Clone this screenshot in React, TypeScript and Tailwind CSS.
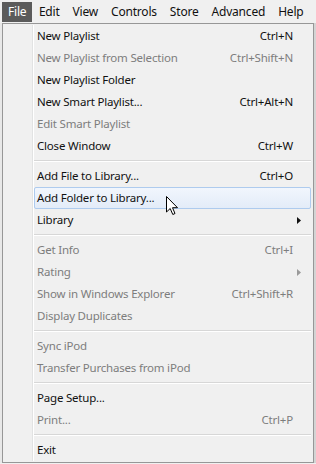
const menus = ["Edit", "View", "Controls", "Store", "Advanced", "Help"];

type Item = {
  label: string;
  shortcut?: string;
  disabled?: boolean;
  submenu?: boolean;
  active?: boolean;
};

const groups: Item[][] = [
  [
    { label: "New Playlist", shortcut: "Ctrl+N" },
    { label: "New Playlist from Selection", shortcut: "Ctrl+Shift+N", disabled: true },
    { label: "New Playlist Folder" },
    { label: "New Smart Playlist...", shortcut: "Ctrl+Alt+N" },
    { label: "Edit Smart Playlist", disabled: true },
    { label: "Close Window", shortcut: "Ctrl+W" },
  ],
  [
    { label: "Add File to Library...", shortcut: "Ctrl+O" },
    { label: "Add Folder to Library...", active: true },
    { label: "Library", submenu: true },
  ],
  [
    { label: "Get Info", shortcut: "Ctrl+I", disabled: true },
    { label: "Rating", submenu: true, disabled: true },
    { label: "Show in Windows Explorer", shortcut: "Ctrl+Shift+R", disabled: true },
    { label: "Display Duplicates", disabled: true },
  ],
  [
    { label: "Sync iPod", disabled: true },
    { label: "Transfer Purchases from iPod", disabled: true },
  ],
  [
    { label: "Page Setup..." },
    { label: "Print...", shortcut: "Ctrl+P", disabled: true },
  ],
  [{ label: "Exit" }],
];

const MenuRow = ({ item }: { item: Item }) => {
  const color = item.disabled ? "text-[#7d7d7d]" : "text-[#111]";
  return (
    <div className="flex h-[22px]">
      <div className="w-[30px] shrink-0" />
      <div
        className={`flex flex-1 items-center pl-[2px] pr-[17px] mr-[2px] rounded-[2px] border ${
          item.active
            ? "border-[#aecbee] bg-gradient-to-b from-[#f1f6fd] to-[#e3ecf8]"
            : "border-transparent"
        } ${color}`}
      >
        <span className="flex-1 whitespace-nowrap">{item.label}</span>
        {item.shortcut && <span className="whitespace-nowrap">{item.shortcut}</span>}
        {item.submenu && (
          <svg width="4" height="7" viewBox="0 0 4 7" className="mr-[-8px]">
            <path d="M0 0 L4 3.5 L0 7 Z" fill={item.disabled ? "#9a9a9a" : "#111"} />
          </svg>
        )}
      </div>
    </div>
  );
};

const Separator = () => (
  <div className="flex h-[8px] items-center">
    <div className="w-[30px] shrink-0" />
    <div className="flex-1 mr-[2px]">
      <div className="h-px bg-[#d7d7d7]" />
      <div className="h-px bg-white" />
    </div>
  </div>
);

const Cursor = () => (
  <svg
    width="13"
    height="20"
    viewBox="0 0 13 20"
    className="absolute left-[166px] top-[196px]"
  >
    <path
      d="M0.5 0.5 L0.5 16 L4.2 12.5 L6.8 18.5 L9 17.5 L6.5 11.7 L11.5 11.7 Z"
      fill="#fff"
      stroke="#000"
      strokeWidth="1"
      strokeLinejoin="miter"
    />
  </svg>
);

export default function App() {
  return (
    <div
      className="relative h-[464px] w-[316px] overflow-hidden bg-[#f0f0f0] text-[11.5px] leading-none tracking-[-0.2px]"
      style={{ fontFamily: '"Noto Sans", "Open Sans", sans-serif' }}
    >
      <div className="flex h-[23px] items-center bg-[#f0f0f0] pl-[2px] text-[12px]">
        <div className="flex h-[20px] items-center bg-[#5b5b5b] px-[6px] text-white">File</div>
        {menus.map((m) => (
          <div key={m} className="px-[6.5px] text-[#111]">
            {m}
          </div>
        ))}
      </div>
      <div className="flex">
        <div className="w-[2px] shrink-0 bg-[#e8e8e8]" />
        <div className="w-[312px] border border-[#979797] bg-[#f0f0f0] py-[1px] pl-[1px]">
          <div className="relative">
            <div className="absolute left-[28px] top-0 bottom-0 w-px bg-[#e2e3e3]" />
            <div className="absolute left-[29px] top-0 bottom-0 w-px bg-white" />
            {groups.map((g, gi) => (
              <div key={gi}>
                {gi > 0 && <Separator />}
                {g.map((item) => (
                  <MenuRow key={item.label} item={item} />
                ))}
              </div>
            ))}
          </div>
        </div>
        <div className="flex-1 bg-[#d4d4d4]" />
      </div>
      <Cursor />
    </div>
  );
}
